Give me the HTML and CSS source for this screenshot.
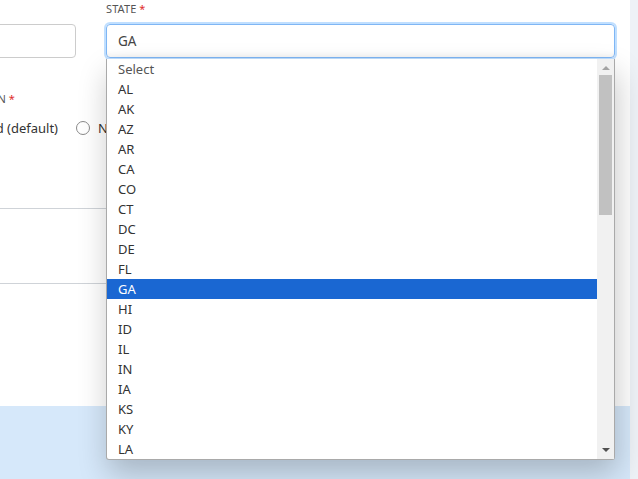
FILE: index.html
```html
<!DOCTYPE html>
<html lang="en">
<head>
<meta charset="utf-8">
<title>Address form</title>
<link rel="stylesheet" href="styles.css">
</head>
<body>
<div class="page">
  <div class="main">
    <div class="content">
      <div class="row">
        <div class="left-col">
          <div class="text-input"></div>
          <div class="label-line"><span class="field-label">DESIGNATION <span class="req">*</span></span></div>
          <div class="radio-line">
            <div class="radio-first"><span class="radio-text">Standard (default)</span></div>
            <span class="radio"></span>
            <span class="radio-text">None</span>
          </div>
        </div>
        <div class="state-col">
          <div class="field-label">STATE <span class="req">*</span></div>
          <div class="select-box">GA</div>
        </div>
      </div>
      <div class="divider first"></div>
      <div class="divider second"></div>
    </div>
    <div class="footer"></div>
  </div>
  <div class="strip"></div>

  <div class="dropdown">
    <ul class="options">
      <li class="placeholder">Select</li>
      <li>AL</li><li>AK</li><li>AZ</li><li>AR</li><li>CA</li><li>CO</li><li>CT</li>
      <li>DC</li><li>DE</li><li>FL</li><li class="selected">GA</li><li>HI</li><li>ID</li>
      <li>IL</li><li>IN</li><li>IA</li><li>KS</li><li>KY</li><li>LA</li>
    </ul>
    <div class="scrollbar">
      <span class="arrow up"></span>
      <span class="thumb"></span>
      <span class="track-fill"></span>
      <span class="arrow down"></span>
    </div>
  </div>
</div>
</body>
</html>
```

FILE: styles.css
```css
* { box-sizing: border-box; }
html, body { margin: 0; padding: 0; }
body {
  font-family: "Noto Sans", "Open Sans", "DejaVu Sans", sans-serif;
  font-size: 13px;
  color: #333;
  background: #fff;
  overflow: hidden;
}
.page {
  position: relative;
  width: 638px;
  height: 479px;
  display: flex;
}
.main {
  width: 630px;
  display: flex;
  flex-direction: column;
}
.strip {
  width: 8px;
  background: #eef2f7;
}
.content {
  height: 406px;
  background: #fff;
  overflow: hidden;
}
.footer {
  flex: 1;
  background: #d6e8fa;
}
.row {
  display: flex;
  gap: 30px;
  margin-left: -160px;
}
.left-col {
  width: 236px;
  flex: none;
  padding-top: 24px;
}
.text-input {
  height: 34px;
  border: 1px solid #ccc;
  border-radius: 4px;
  background: #fff;
}
.label-line {
  display: flex;
  justify-content: flex-end;
  padding-right: 61px;
  margin-top: 32px;
}
.field-label {
  font-size: 11px;
  line-height: 18px;
  color: #555;
  white-space: nowrap;
  letter-spacing: 0.1px;
}
.req { color: #e02b2b; }
.radio-line {
  display: flex;
  align-items: center;
  margin-top: 10px;
  height: 20px;
}
.radio-first {
  width: 218px;
  display: flex;
  justify-content: flex-end;
  flex: none;
}
.radio-text {
  white-space: nowrap;
  font-size: 13px;
  color: #333;
}
.radio {
  width: 14px;
  height: 14px;
  border: 1px solid #8a8a8a;
  border-radius: 50%;
  margin: 0 8px 0 18px;
  flex: none;
}
.state-col {
  flex: 1;
  margin-right: 15px;
}
.select-box {
  margin-top: 6px;
  height: 34px;
  border: 1px solid #7fb6f4;
  border-radius: 4px;
  box-shadow: 0 0 0 2px rgba(140, 196, 255, 0.55), inset 0 -5px 5px -3px rgba(0, 0, 0, 0.05);
  padding: 0 11px;
  line-height: 32px;
  font-size: 13.5px;
  color: #444;
}
.divider {
  height: 1px;
  background: #cfd3d8;
  margin-right: 24px;
}
.divider.first { margin-top: 70px; }
.divider.second { margin-top: 74px; }

.dropdown {
  position: absolute;
  left: 106px;
  top: 59px;
  width: 509px;
  height: 401px;
  background: #fff;
  border: 1px solid #a9a9a9;
  border-top: none;
  border-radius: 0 0 3px 3px;
  box-shadow: 2px 14px 30px rgba(0, 0, 0, 0.22);
  display: flex;
}
.options {
  list-style: none;
  margin: 0;
  padding: 0;
  flex: 1;
}
.options li {
  height: 20px;
  line-height: 20px;
  padding-left: 11px;
  font-size: 13px;
  color: #333;
}
.options li.placeholder { color: #555; }
.options li.selected {
  background: #1a67d2;
  color: #fff;
}
.scrollbar {
  width: 17px;
  background: #f1f1f1;
  display: flex;
  flex-direction: column;
  align-items: center;
}
.arrow {
  width: 0;
  height: 0;
  border-left: 4px solid transparent;
  border-right: 4px solid transparent;
}
.arrow.up {
  border-bottom: 4px solid #a3a3a3;
  margin-top: 7px;
}
.arrow.down {
  border-top: 4px solid #505050;
  margin-bottom: 7px;
}
.thumb {
  width: 13px;
  height: 140px;
  background: #c1c1c1;
  margin-top: 5px;
}
.track-fill { flex: 1; }
```
